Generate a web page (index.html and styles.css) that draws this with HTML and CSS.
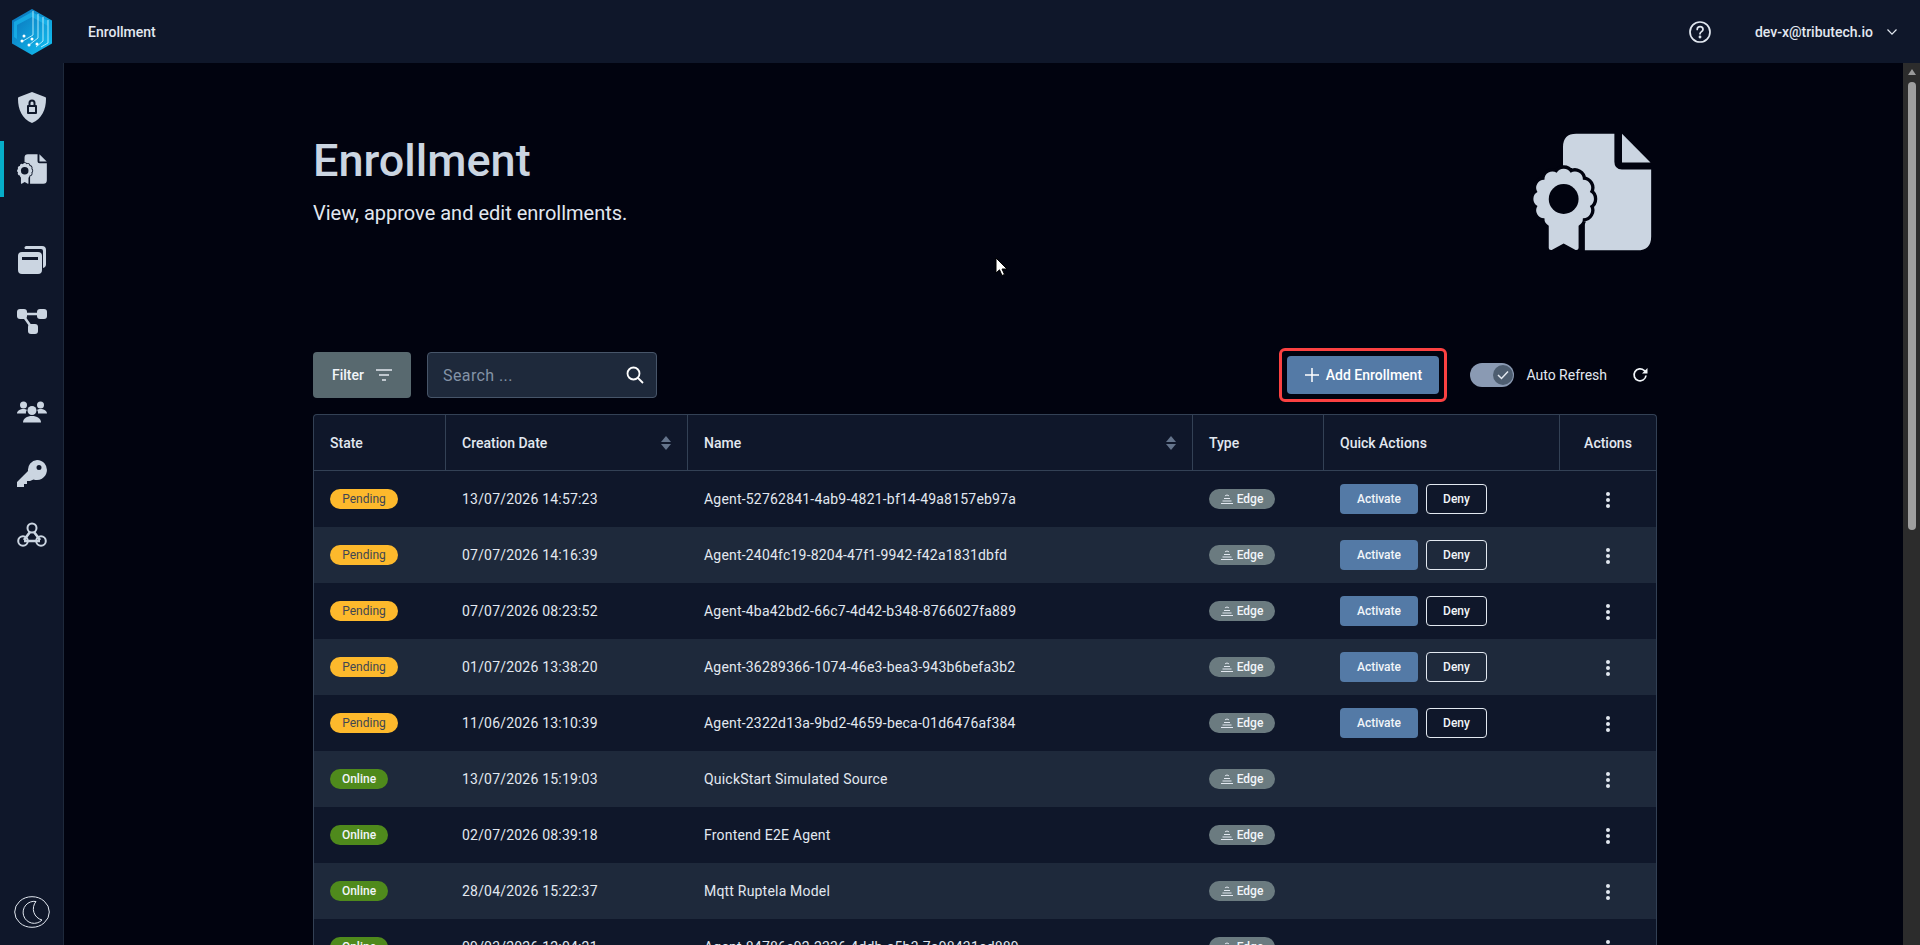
FILE: index.html
```html
<!DOCTYPE html>
<html lang="en">
<head>
  <meta charset="UTF-8">
  <meta name="viewport" content="width=device-width, initial-scale=1.0">
  <title>Enrollment</title>
  <link rel="stylesheet" href="styles.css">
</head>
<body>
  <svg class="defs" width="0" height="0">
    <symbol id="file-cert" viewBox="160 98 358 356">
      <path fill="currentColor" d="M250 200V140Q250 100 290 100H405V185Q405 208 428 208H516V410Q516 452 474 452H316V370L250 300Z"/>
      <path fill="currentColor" d="M428 100L514 187H428Z"/>
      <path fill="currentColor" stroke="var(--cut)" stroke-width="20" paint-order="stroke" d="M331 318A24 24 0 0 1 310 355A24 24 0 0 1 273 376A24 24 0 0 1 231 376A24 24 0 0 1 194 355A24 24 0 0 1 173 318A24 24 0 0 1 173 276A24 24 0 0 1 194 239A24 24 0 0 1 231 218A24 24 0 0 1 273 218A24 24 0 0 1 310 239A24 24 0 0 1 331 276A24 24 0 0 1 331 318Z"/>
      <circle cx="252" cy="297" r="45" fill="var(--cut)"/>
      <path fill="currentColor" d="M207 360H297V445Q297 452 288 451L252 431L216 451Q207 452 207 445Z"/>
    </symbol>
  </svg>

  <header class="topbar">
    <div class="logo-box">
      <svg width="40" height="46" viewBox="0 0 40 46">
        <defs>
          <linearGradient id="hexfill" x1="0" y1="0" x2="1" y2="1">
            <stop offset="0" stop-color="#0b6fb8"/>
            <stop offset="1" stop-color="#12c4f4"/>
          </linearGradient>
        </defs>
        <path d="M20 0L40 11.5V34.500L20 46L0 34.500V11.500Z" fill="url(#hexfill)"/>
        <path d="M20 3L36 12V17L20 8L5 16V30L2 28V13Z" fill="#19b7ee" opacity=".7"/>
        <path d="M21 2V26L11 32M26 5V29L17 36M31 8V32L24 38M36 11V34L29 38" fill="none" stroke="#bdf0ff" stroke-width=".9"/>
        <circle cx="12" cy="27" r="1.500" fill="#fff"/><circle cx="10" cy="32" r="1.500" fill="#fff"/>
        <circle cx="20" cy="30" r="1.500" fill="#fff"/><circle cx="17" cy="36" r="1.500" fill="#fff"/>
        <circle cx="25" cy="35" r="1.500" fill="#fff"/>
      </svg>
    </div>
    <div class="page-name">Enrollment</div>
    <svg class="help-icon" width="24" height="24" viewBox="0 0 24 24" fill="none" stroke="#e2e8f0" stroke-width="1.700">
      <circle cx="12" cy="12" r="10"/>
      <path d="M9.200 9.500A2.900 2.900 0 0 1 15 9.500C15 11.500 12 11.700 12 13.800" stroke-linecap="round"/>
      <circle cx="12" cy="17" r=".6" fill="#e2e8f0"/>
    </svg>
    <div class="user-name">dev-x@tributech.io</div>
    <svg class="user-chevron" width="12" height="8" viewBox="0 0 12 8" fill="none" stroke="#e2e8f0" stroke-width="1.200"><path d="M1.500 1.500L6 6.200L10.500 1.500"/></svg>
  </header>

  <div class="layout">
    <nav class="sidebar">
      <a class="nav-item first">
        <svg width="28" height="32" viewBox="0 0 28 32"><path fill="#cbd5e1" fill-rule="evenodd" d="M14 0L27 5C28 5.400 28 6 28 7C28 17 24 27 14 31C4 27 0 17 0 7C0 6 0 5.400 1 5ZM9 14V21A1 1 0 0 0 10 22H18A1 1 0 0 0 19 21V14A1 1 0 0 0 18 13H17.500V11A3.500 3.500 0 0 0 10.500 11V13H10A1 1 0 0 0 9 14ZM12.500 13V11A1.500 1.500 0 0 1 15.500 11V13ZM11 15H17V20H11Z"/></svg>
      </a>
      <a class="nav-item active">
        <svg class="cert-small" width="30" height="30"><use href="#file-cert"/></svg>
      </a>
      <a class="nav-item group-start">
        <svg width="28" height="28" viewBox="0 0 28 28"><path fill="#cbd5e1" d="M8 0H24A4 4 0 0 1 28 4V18A4 4 0 0 1 25 22V5A2 2 0 0 0 23 3H7A2 2 0 0 1 8 0Z"/><path fill="#cbd5e1" fill-rule="evenodd" d="M4 6H20A4 4 0 0 1 24 10V24A4 4 0 0 1 20 28H4A4 4 0 0 1 0 24V10A4 4 0 0 1 4 6ZM4 11V14H20V11Z"/></svg>
      </a>
      <a class="nav-item">
        <svg width="30" height="25" viewBox="0 0 30 25"><path fill="none" stroke="#cbd5e1" stroke-width="2.500" d="M5 5H25M5 5L15 19"/><rect x="0" y="0" width="10" height="10" rx="3" fill="#cbd5e1"/><rect x="20" y="0" width="10" height="10" rx="3" fill="#cbd5e1"/><rect x="11" y="15" width="10" height="10" rx="3" fill="#cbd5e1"/></svg>
      </a>
      <a class="nav-item group-start">
        <svg width="30" height="22" viewBox="0 0 30 22"><g fill="#cbd5e1"><circle cx="6.500" cy="4" r="3.500"/><circle cx="23.500" cy="4" r="3.500"/><path d="M0 12.500C0 10 3 8 6.500 8C8 8 9 8.300 10 9C9 10 8.800 11.500 9 12.500Z"/><path d="M30 12.500C30 10 27 8 23.500 8C22 8 21 8.300 20 9C21 10 21.200 11.500 21 12.500Z"/><circle cx="15" cy="9.500" r="4.500"/><path d="M6 21.500C6 17.500 10 15 15 15C20 15 24 17.500 24 21.500Z"/></g></svg>
      </a>
      <a class="nav-item">
        <svg width="30" height="27" viewBox="0 0 30 27"><path fill="#cbd5e1" fill-rule="evenodd" d="M20 0A10 10 0 1 1 16.500 19.400L13 21H10V24H7V27H0V22L11 11A10 10 0 0 1 20 0ZM22 5A2.500 2.500 0 1 0 22 10A2.500 2.500 0 0 0 22 5Z"/></svg>
      </a>
      <a class="nav-item">
        <svg width="30" height="25" viewBox="0 0 30 25" fill="none" stroke="#cbd5e1" stroke-width="2"><circle cx="15" cy="6" r="4.500"/><circle cx="6" cy="19" r="4.800"/><circle cx="24" cy="19" r="4.800"/><path d="M13 10L7 18M17 10L23 18M7 19H23" stroke-width="2.600"/></svg>
      </a>
      <div class="sidebar-bottom">
        <svg width="36" height="32" viewBox="0 0 36 32" fill="none" stroke="#e2e8f0" stroke-width="1"><ellipse cx="18" cy="16" rx="17.300" ry="15.300"/><path d="M22 5.500A11 11 0 1 0 28 24A11.500 11.500 0 0 1 22 5.500Z"/></svg>
      </div>
    </nav>

    <main class="content">
      <section class="hero">
        <div>
          <h1>Enrollment</h1>
          <p>View, approve and edit enrollments.</p>
        </div>
        <svg class="hero-icon" width="119" height="118"><use href="#file-cert"/></svg>
      </section>

      <div class="toolbar">
        <button class="filter-btn">Filter
          <svg width="16" height="12" viewBox="0 0 16 12" stroke="#e2e8f0" stroke-width="1.500"><path d="M0 1H16M3 6H13M6 11H10"/></svg>
        </button>
        <div class="search-box">
          <span>Search ...</span>
          <svg width="18" height="18" viewBox="0 0 18 18" fill="none" stroke="#fff" stroke-width="1.800"><circle cx="7.500" cy="7.500" r="6"/><path d="M12 12L17 17"/></svg>
        </div>
        <div class="spacer"></div>
        <div class="add-wrap">
          <button class="add-btn"><svg width="14" height="14" viewBox="0 0 14 14" stroke="#fff" stroke-width="1.500"><path d="M7 0V14M0 7H14"/></svg>Add Enrollment</button>
        </div>
        <div class="toggle"><span class="knob"><svg width="12" height="10" viewBox="0 0 12 10" fill="none" stroke="#e2e8f0" stroke-width="1.500"><path d="M1 5L4.500 8.500L11 1.500"/></svg></span></div>
        <span class="auto-label">Auto Refresh</span>
        <svg class="refresh" width="16" height="16" viewBox="0 0 16 16" fill="none" stroke="#f1f5f9" stroke-width="1.700"><path d="M14 8.500A6 6 0 1 1 12.200 3.500L14.500 5"/><path fill="#f1f5f9" stroke="none" d="M15.500 1V6.500H10Z"/></svg>
      </div>

      <table class="enroll-table">
        <thead>
          <tr>
            <th class="col-state">State</th>
            <th class="col-date"><div class="sort-head">Creation Date<span class="sort"></span></div></th>
            <th class="col-name"><div class="sort-head">Name<span class="sort"></span></div></th>
            <th class="col-type">Type</th>
            <th class="col-quick">Quick Actions</th>
            <th class="col-actions">Actions</th>
          </tr>
        </thead>
        <tbody id="rows"></tbody>
      </table>
    </main>

    <div class="scrollbar">
      <span class="arrow"></span>
      <span class="thumb"></span>
    </div>
  </div>

  <svg class="cursor" width="13" height="20" viewBox="0 0 13 20"><path d="M1 1V16L4.500 12.800L7 18.500L9.500 17.400L7 12H12Z" fill="#fff" stroke="#000" stroke-width="1"/></svg>

  <script>
    const rows = [
      ['Pending', '13/07/2026 14:57:23', 'Agent-52762841-4ab9-4821-bf14-49a8157eb97a'],
      ['Pending', '07/07/2026 14:16:39', 'Agent-2404fc19-8204-47f1-9942-f42a1831dbfd'],
      ['Pending', '07/07/2026 08:23:52', 'Agent-4ba42bd2-66c7-4d42-b348-8766027fa889'],
      ['Pending', '01/07/2026 13:38:20', 'Agent-36289366-1074-46e3-bea3-943b6befa3b2'],
      ['Pending', '11/06/2026 13:10:39', 'Agent-2322d13a-9bd2-4659-beca-01d6476af384'],
      ['Online', '13/07/2026 15:19:03', 'QuickStart Simulated Source'],
      ['Online', '02/07/2026 08:39:18', 'Frontend E2E Agent'],
      ['Online', '28/04/2026 15:22:37', 'Mqtt Ruptela Model'],
      ['Online', '09/03/2026 12:04:21', 'Agent-84786e92-2336-4ddb-a5b3-7a98431ed889']
    ];
    const edgeIcon = '<svg width="12" height="10" viewBox="0 0 12 10" fill="none" stroke="#e2e8f0" stroke-width="1"><path d="M0 9.500H12M1.500 7H10.500M3 4.500H9M4 2C5 .8 7 .8 8 2"/></svg>';

    document.getElementById('rows').innerHTML = rows.map(r => {
      const quick = r[0] === 'Pending'
        ? '<button class="activate">Activate</button><button class="deny">Deny</button>'
        : '';
      return `<tr>
        <td><span class="state ${r[0].toLowerCase()}">${r[0]}</span></td>
        <td>${r[1]}</td>
        <td>${r[2]}</td>
        <td><span class="edge">${edgeIcon}Edge</span></td>
        <td><div class="quick">${quick}</div></td>
        <td class="dots-cell"><span class="dots"><i></i><i></i><i></i></span></td>
      </tr>`;
    }).join('');
  </script>
</body>
</html>
```

FILE: styles.css
```css
html, body {
  height: 100%;
}

body {
  margin: 0;
  background-color: #01030f;
  color: #e2e8f0;
  font-family: Roboto, "Liberation Sans", sans-serif;
  font-size: 14px;
  overflow: hidden;
  --cut: #01030f;
}

.defs {
  display: block;
  height: 0;
}

button {
  font-family: inherit;
  cursor: pointer;
}

.topbar {
  height: 63px;
  background-color: #0f172a;
  display: flex;
  align-items: center;
  box-sizing: border-box;
}

.logo-box {
  width: 64px;
  padding-left: 12px;
  box-sizing: border-box;
  display: flex;
}

.page-name {
  margin-left: 24px;
  font-weight: 500;
  color: #e2e8f0;
  flex: 1;
}

.help-icon {
  margin-right: 43px;
}

.user-name {
  font-weight: 500;
  color: #e2e8f0;
}

.user-chevron {
  margin: 0 22px 0 13px;
}

.layout {
  display: flex;
  height: calc(100vh - 63px);
}

.sidebar {
  width: 64px;
  background-color: #0f172a;
  border-right: 1px solid #1e293b;
  box-sizing: border-box;
  display: flex;
  flex-direction: column;
  --cut: #0f172a;
}

.nav-item {
  height: 56px;
  margin-bottom: 5px;
  display: flex;
  align-items: center;
  justify-content: center;
  color: #cbd5e1;
  border-left: 4px solid transparent;
  padding-right: 4px;
}

.nav-item.first {
  margin-top: 17px;
}

.nav-item.group-start {
  margin-top: 30px;
}

.nav-item.active {
  border-left-color: #06aec9;
}

.sidebar-bottom {
  margin-top: auto;
  margin-bottom: 17px;
  display: flex;
  justify-content: center;
}

.content {
  flex: 1;
  overflow: hidden;
  padding: 0 0 0 249px;
}

.hero {
  width: 1344px;
  height: 289px;
  padding: 70px 5px 0 0;
  box-sizing: border-box;
  display: flex;
  justify-content: space-between;
  align-items: flex-start;
}

.hero h1 {
  margin: 0;
  font-size: 45px;
  line-height: 56px;
  font-weight: 500;
  color: #cbd5e1;
}

.hero p {
  margin: 10px 0 0;
  font-size: 20px;
  line-height: 28px;
  color: #e2e8f0;
}

.hero-icon {
  color: #cbd5e1;
}

.toolbar {
  width: 1344px;
  height: 46px;
  display: flex;
  align-items: center;
  margin-bottom: 16px;
}

.filter-btn {
  width: 98px;
  height: 46px;
  background-color: #58696f;
  color: #f1f5f9;
  border: none;
  border-radius: 4px;
  font-size: 14px;
  font-weight: 500;
  display: flex;
  align-items: center;
  justify-content: center;
  gap: 12px;
}

.search-box {
  width: 230px;
  height: 46px;
  margin-left: 16px;
  background-color: #1e293b;
  border: 1px solid #475569;
  border-radius: 4px;
  box-sizing: border-box;
  padding: 0 12px 0 15px;
  display: flex;
  align-items: center;
  justify-content: space-between;
  color: #8493a6;
  font-size: 16px;
  letter-spacing: 0.4px;
}

.spacer {
  flex: 1;
}

.add-wrap {
  border: 3px solid #fb4141;
  border-radius: 6px;
  padding: 5px;
  display: flex;
}

.add-btn {
  width: 152px;
  height: 38px;
  background-color: #547aa6;
  color: #fff;
  border: none;
  border-radius: 4px;
  font-size: 14px;
  font-weight: 500;
  display: flex;
  align-items: center;
  justify-content: center;
  gap: 7px;
}

.toggle {
  width: 44px;
  height: 24px;
  margin-left: 23px;
  border-radius: 12px;
  background-color: #8a9ab3;
  display: flex;
  align-items: center;
  justify-content: flex-end;
}

.knob {
  width: 20px;
  height: 20px;
  margin-right: 1px;
  border-radius: 50%;
  background-color: #4d5d70;
  display: flex;
  align-items: center;
  justify-content: center;
}

.auto-label {
  margin-left: 12px;
  color: #e2e8f0;
}

.refresh {
  margin-left: 25px;
  margin-right: 9px;
}

.enroll-table {
  width: 1344px;
  table-layout: fixed;
  border-collapse: separate;
  border-spacing: 0;
  border: 1px solid #334155;
  border-bottom: none;
  border-radius: 4px 4px 0 0;
  background-color: #0f172a;
}

.enroll-table th {
  height: 56px;
  padding: 0 16px;
  text-align: left;
  font-weight: 500;
  color: #e2e8f0;
  border-bottom: 1px solid #334155;
  border-right: 1px solid #334155;
  box-sizing: border-box;
}

.enroll-table th:last-child {
  border-right: none;
  text-align: center;
}

.col-state { width: 132px; }
.col-date { width: 242px; }
.col-name { width: 505px; }
.col-type { width: 131px; }
.col-quick { width: 236px; }

.sort-head {
  display: flex;
  justify-content: space-between;
  align-items: center;
}

.sort {
  width: 11px;
  height: 14px;
  margin-right: -1px;
  background: linear-gradient(#64748b, #64748b) no-repeat;
  background-size: 0 0;
  position: relative;
}

.sort::before,
.sort::after {
  content: "";
  position: absolute;
  left: 0;
  border-left: 5.5px solid transparent;
  border-right: 5.5px solid transparent;
}

.sort::before {
  top: 0;
  border-bottom: 6px solid #64748b;
}

.sort::after {
  bottom: 0;
  border-top: 6px solid #64748b;
}

.enroll-table td {
  height: 56px;
  padding: 0 16px;
  color: #e2e8f0;
  letter-spacing: 0.2px;
  box-sizing: border-box;
}

.enroll-table tbody tr:nth-child(even) td {
  background-color: #1e293b;
}

.state {
  display: inline-block;
  height: 20px;
  line-height: 20px;
  border-radius: 10px;
  font-size: 12px;
  text-align: center;
  letter-spacing: 0;
}

.state.pending {
  width: 68px;
  background-color: #fdb92c;
  color: #3f4652;
}

.state.online {
  width: 58px;
  background-color: #4f8a1c;
  color: #f1f5f9;
  font-weight: 500;
}

.edge {
  width: 66px;
  height: 20px;
  border-radius: 10px;
  background-color: #6b7b80;
  color: #f1f5f9;
  font-size: 12px;
  font-weight: 500;
  letter-spacing: 0;
  display: inline-flex;
  align-items: center;
  justify-content: center;
  gap: 4px;
}

.quick {
  display: flex;
  gap: 8px;
}

.quick button {
  height: 30px;
  border-radius: 4px;
  font-size: 12px;
  font-weight: 500;
  color: #f1f5f9;
}

.activate {
  width: 78px;
  background-color: #547aa6;
  border: none;
}

.deny {
  width: 61px;
  background-color: transparent;
  border: 1px solid #e2e8f0;
}

.dots-cell {
  text-align: center;
}

.dots {
  display: inline-flex;
  flex-direction: column;
  gap: 2px;
  vertical-align: middle;
}

.dots i {
  width: 4px;
  height: 4px;
  border-radius: 50%;
  background-color: #e2e8f0;
}

.scrollbar {
  width: 17px;
  background-color: #2c2c2c;
  display: flex;
  flex-direction: column;
  align-items: center;
}

.arrow {
  margin-top: 6px;
  border-left: 4px solid transparent;
  border-right: 4px solid transparent;
  border-bottom: 6px solid #9a9a9a;
}

.thumb {
  width: 8px;
  height: 448px;
  margin-top: 7px;
  border-radius: 4px;
  background-color: #9f9f9f;
}

.cursor {
  position: absolute;
  left: 995px;
  top: 257px;
}

.cert-small {
  color: #cbd5e1;
}
```
